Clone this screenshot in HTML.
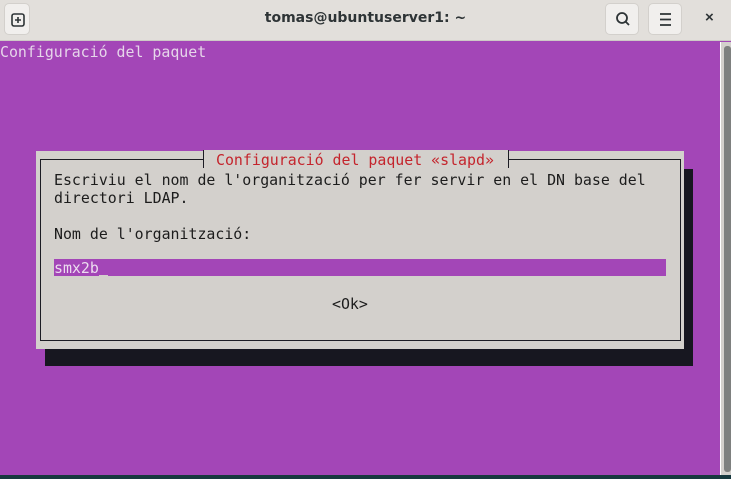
<!DOCTYPE html>
<html><head><meta charset="utf-8"><style>
*{margin:0;padding:0;box-sizing:border-box}
body{width:731px;height:479px;overflow:hidden;background:#a346b7;position:relative;font-family:"DejaVu Sans Mono",monospace;font-size:14.9px}
.bar{position:absolute;left:0;top:0;width:731px;height:41px;background:#e2dfdb;border-bottom:1px solid #cdcac6}
.btn{position:absolute;top:3px;width:34px;height:32px;background:#f1efed;border:1px solid #d3d0cc;border-radius:5px}
.title{position:absolute;top:0;left:0;width:731px;text-align:center;line-height:37px;font-family:"DejaVu Sans",sans-serif;font-weight:bold;font-size:14px;color:#2e3436}
.t{position:absolute;white-space:pre;line-height:18px;color:#1c1c1c}
.scroll{position:absolute;left:720px;top:42px;width:11px;height:434px;background:#d3d0cc;border-left:1px solid #fff}
.thumb{position:absolute;left:724px;top:46px;width:7px;height:426px;background:#7e807f;border-radius:3px}
</style></head><body>
<div class="bar">
 <div class="btn" style="left:4px;width:26px"><svg width="26" height="32"><rect x="7" y="10" width="12" height="12" rx="2" fill="none" stroke="#2e3436" stroke-width="1.6"/><path d="M13 13v6M10 16h6" stroke="#2e3436" stroke-width="1.6"/></svg></div>
 <div class="title">tomas@ubuntuserver1: ~</div>
 <div class="btn" style="left:605px"><svg width="34" height="32"><circle cx="16" cy="14" r="5" fill="none" stroke="#2e3436" stroke-width="1.8"/><path d="M19.5 17.5l3.5 3.5" stroke="#2e3436" stroke-width="1.8"/></svg></div>
 <div class="btn" style="left:648px"><svg width="34" height="32"><path d="M11 10h11M11 15.5h11M11 21h11" stroke="#2e3436" stroke-width="1.8"/></svg></div>
 <div style="position:absolute;left:705px;top:9px;font-family:'Liberation Sans',sans-serif;font-size:15px;font-weight:bold;color:#2e3436">×</div>
</div>
<div class="t" style="left:0;top:43px;color:#e6d6ea">Configuració del paquet</div>
<div style="position:absolute;left:45px;top:169px;width:648px;height:197px;background:#171720"></div>
<div style="position:absolute;left:36px;top:151px;width:648px;height:198px;background:#d3d0cc"></div>
<div style="position:absolute;left:40px;top:159px;width:641px;height:182px;border:1px solid #1c1c24"></div>
<div class="t" style="left:203px;top:150px;background:#d3d0cc;width:306px;height:18px;border-left:1px solid #1c1c24;border-right:1px solid #1c1c24"></div>
<div class="t" style="left:216px;top:151px;color:#c4242c">Configuració del paquet «slapd»</div>
<div class="t" style="left:54px;top:171px">Escriviu el nom de l'organització per fer servir en el DN base del
directori LDAP.

Nom de l'organització:</div>
<div style="position:absolute;left:54px;top:259px;width:612px;height:17px;background:#a346b7"></div>
<div class="t" style="left:54px;top:259px;color:#ecdcef">smx2b</div>
<div style="position:absolute;left:99px;top:275px;width:9px;height:1px;background:#d3d0cc"></div>
<div class="t" style="left:332px;top:295px">&lt;Ok&gt;</div>
<div class="scroll"></div><div class="thumb"></div>
<div style="position:absolute;left:0;top:475px;width:731px;height:4px;background:#17393f"></div>
</body></html>
